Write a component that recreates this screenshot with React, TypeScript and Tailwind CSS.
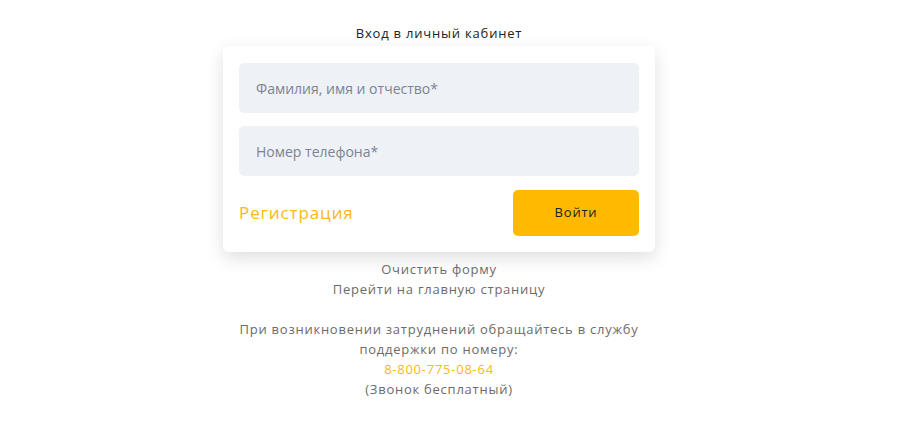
export default function App() {
  return (
    <div
      className="min-h-screen bg-white flex flex-col items-center pt-[24px] pr-[32px]"
      style={{ fontFamily: '"Open Sans", "Noto Sans", sans-serif' }}
    >
      <h1 className="text-[13px] leading-[18px] tracking-[0.8px] text-[#222] font-normal">Вход в личный кабинет</h1>

      <form className="mt-[4px] w-[432px] bg-white rounded-[6px] shadow-[0_6px_18px_rgba(0,0,0,0.13)] pt-[17px] px-[16px] pb-[16px]">
        <input
          className="block w-full h-[50px] rounded-[5px] bg-[#eef1f6] px-[17px] text-[14px] text-[#333] placeholder:text-[#7d8392] outline-none"
          placeholder="Фамилия, имя и отчество*"
        />
        <input
          className="block w-full h-[50px] mt-[13px] rounded-[5px] bg-[#eef1f6] px-[17px] text-[14px] text-[#333] placeholder:text-[#7d8392] outline-none"
          placeholder="Номер телефона*"
        />
        <div className="mt-[14px] flex items-center justify-between">
          <a href="#" className="text-[17px] tracking-[0.9px] text-[#fbb917]">
            Регистрация
          </a>
          <button
            type="submit"
            className="w-[126px] h-[46px] rounded-[5px] bg-[#ffba00] text-[13px] tracking-[0.8px] text-[#222]"
          >
            Войти
          </button>
        </div>
      </form>

      <div className="mt-[7px] w-[410px] text-center text-[13px] leading-[20px] tracking-[0.75px] text-[#6b6b6b]">
        <a href="#" className="block">Очистить форму</a>
        <a href="#" className="block">Перейти на главную страницу</a>
        <p className="mt-[20px]">
          При возникновении затруднений обращайтесь в службу поддержки по номеру:
        </p>
        <a href="#" className="block text-[#fbb917]">8-800-775-08-64</a>
        <p>(Звонок бесплатный)</p>
      </div>
    </div>
  );
}
